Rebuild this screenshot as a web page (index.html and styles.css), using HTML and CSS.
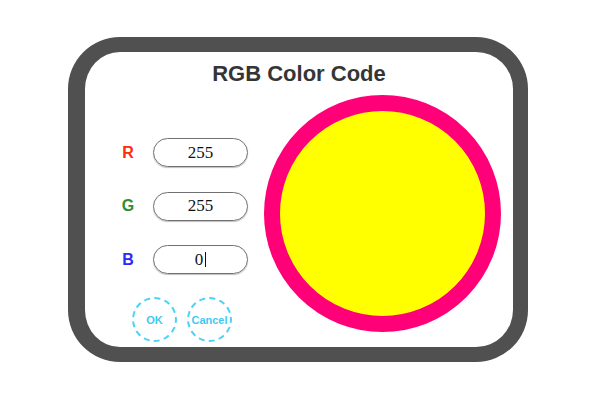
FILE: index.html
```html
<!DOCTYPE html>
<html>
<head>
<meta charset="utf-8">
<link rel="stylesheet" href="styles.css">
</head>
<body>
<div class="frame">
  <h1 class="title">RGB Color Code</h1>
  <div class="main">
    <div class="controls">
      <div class="row">
        <span class="label label-r">R</span>
        <div class="field">255</div>
      </div>
      <div class="row">
        <span class="label label-g">G</span>
        <div class="field">255</div>
      </div>
      <div class="row">
        <span class="label label-b">B</span>
        <div class="field">0<span class="caret"></span></div>
      </div>
      <div class="buttons">
        <div class="btn">OK</div>
        <div class="btn">Cancel</div>
      </div>
    </div>
    <div class="swatch"></div>
  </div>
</div>
</body>
</html>
```

FILE: styles.css
```css
html, body {
  margin: 0;
  padding: 0;
  background: #ffffff;
}

body {
  width: 600px;
  height: 400px;
  overflow: hidden;
  font-family: "Liberation Sans", Arial, sans-serif;
}

.frame {
  box-sizing: border-box;
  margin: 37px 0 0 68px;
  width: 460px;
  height: 325px;
  border: 15px solid #505050;
  border-left-width: 17px;
  border-radius: 52px;
  background: #ffffff;
  display: flex;
  flex-direction: column;
}

.title {
  margin: 9px 0 0 0;
  height: 26px;
  line-height: 26px;
  font-size: 22px;
  font-weight: bold;
  color: #353535;
  text-align: center;
}

.main {
  display: flex;
  align-items: flex-start;
}

.controls {
  width: 163px;
  padding: 51px 0 0 28px;
  box-sizing: border-box;
  display: flex;
  flex-direction: column;
  gap: 24.5px;
}

.row {
  display: flex;
  align-items: center;
  gap: 10px;
}

.label {
  width: 30px;
  text-align: center;
  font-size: 16px;
  font-weight: bold;
}

.label-r { color: #ff2a10; }
.label-g { color: #2f8f2f; }
.label-b { color: #2a2aff; }

.field {
  box-sizing: border-box;
  width: 95px;
  height: 29px;
  border: 1.5px solid #707070;
  border-radius: 15px;
  box-shadow: 0 1px 1px rgba(0, 0, 0, 0.25);
  display: flex;
  align-items: center;
  justify-content: center;
  font-family: "Liberation Serif", "Times New Roman", serif;
  font-size: 17px;
  color: #111111;
}

.caret {
  display: inline-block;
  width: 0;
  height: 15px;
  margin-left: 2px;
  border-left: 1.5px solid #111111;
}

.buttons {
  display: flex;
  gap: 10px;
  padding-left: 19px;
  margin-top: -1.5px;
}

.btn {
  box-sizing: border-box;
  width: 45px;
  height: 45px;
  border: 2px dashed #4cd2f6;
  border-radius: 50%;
  display: flex;
  align-items: center;
  justify-content: center;
  font-size: 11px;
  font-weight: bold;
  color: #3fcaf2;
}

.swatch {
  box-sizing: border-box;
  width: 237px;
  height: 237px;
  margin: 8px 0 0 16px;
  border: 16px solid #ff0078;
  border-radius: 50%;
  background: #ffff00;
}
```
